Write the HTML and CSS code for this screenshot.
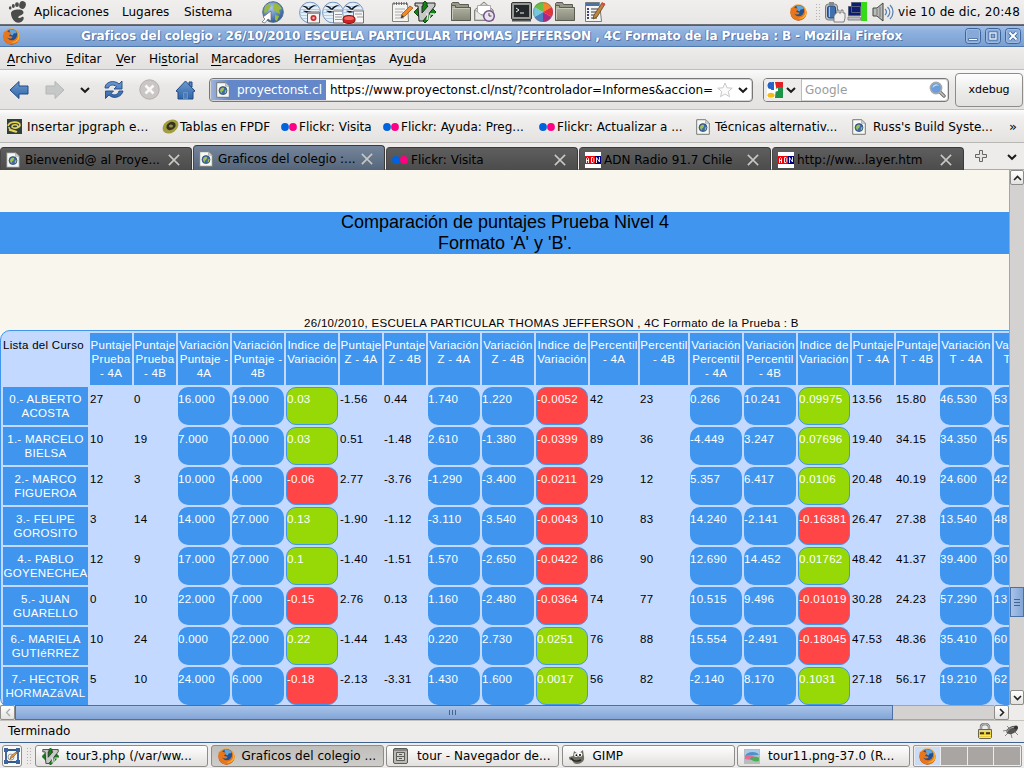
FILE: index.html
```html
<!DOCTYPE html>
<html lang="es">
<head>
<meta charset="utf-8">
<title>Graficos del colegio - Mozilla Firefox</title>
<link rel="stylesheet" href="styles.css">
</head>
<body>
<svg class="defs" aria-hidden="true">
  <defs>
    <linearGradient id="blueg" x1="0" y1="0" x2="0" y2="1"><stop offset="0" stop-color="#6f9ad0"/><stop offset="1" stop-color="#2f66a8"/></linearGradient>
    <linearGradient id="fold" x1="0" y1="0" x2="0" y2="1"><stop offset="0" stop-color="#b5b6a4"/><stop offset="1" stop-color="#85877a"/></linearGradient>
    <radialGradient id="sea" cx=".4" cy=".3" r=".8"><stop offset="0" stop-color="#a9c8ec"/><stop offset="1" stop-color="#1f4f8c"/></radialGradient>
    <radialGradient id="fox" cx=".6" cy=".2" r=".9"><stop offset="0" stop-color="#ffd84a"/><stop offset=".5" stop-color="#ee7d1b"/><stop offset="1" stop-color="#a92b08"/></radialGradient>
  </defs>
  <symbol id="firefox" viewBox="0 0 16 16">
    <circle cx="8" cy="8" r="7.7" fill="url(#fox)"/>
    <circle cx="8.3" cy="6.4" r="5.4" fill="#24518f"/>
    <path d="M6 1.6c3-1 6 .5 7 3l-3 .5-1 2-2-1z" fill="#63a5dd"/>
    <path d="M1 3l1 1.2C3 3 5 3 5.500 4l2 .3C7.600 6 6 6.300 5.700 7.300c1 .7 2.300.3 3.300 1.200-1 2-4 1.500-5 .5 1 3.500 7.500 4 9-1 .7-2 .2-4-.6-5.200C15.600 5 16 8 15 11c-2 4-6 5-9.500 4C1 13.600-.5 8 1 3z" fill="#e8761a"/>
    <path d="M13 3c2 3 1.500 6.500 0 8-2 2.300-4.500 2.500-6.500 1.500 4 3 8.500.5 9-4C15.700 6 14.600 4 13 3z" fill="#f9b233"/>
  </symbol>
  <symbol id="page" viewBox="0 0 14 16">
    <path d="M.7.7h9L13.300 4v11.300H.7z" fill="#f7f8f5" stroke="#777b74"/>
    <path d="M9.500.8l3.700 3.500H9.500z" fill="#cfd2cb" stroke="#9a9d96" stroke-width=".6"/>
    <circle cx="7" cy="8.600" r="4" fill="#3c6ca8" stroke="#26466f" stroke-width=".7"/>
    <path d="M4 8c1-2.500 3-2.500 4-2 .500 1-.5 2-1 3-1.500.300-1.500 1.500-1 2.500-1-.5-2-1.500-2-3.500zM9 8.500l1.700-.5-1 3-1 .500z" fill="#a9bf4a"/>
  </symbol>
  <symbol id="flickr" viewBox="0 0 16 8"><circle cx="4" cy="4" r="3.900" fill="#0063dc"/><circle cx="12" cy="4" r="3.900" fill="#ff0084"/></symbol>
  <symbol id="close" viewBox="0 0 12 12"><path d="M1.500 1.500l9 9M10.500 1.500l-9 9" stroke="#c9c9c3" stroke-width="1.700" fill="none" stroke-linecap="square"/></symbol>
  <symbol id="chev" viewBox="0 0 12 8"><path d="M2 2l4 3.800L10 2" stroke="#1b1b1b" stroke-width="2" fill="none"/></symbol>
  <symbol id="adn" viewBox="0 0 16 16"><path d="M0 0h16v16H0z" fill="#fff"/><path d="M0 4h10v8H0z" fill="#f00008"/><path d="M10 4h6v8h-6z" fill="#00007c"/><path d="M1.500 11V6.500l1-1 1 1V11M1.500 8.500h2M6.500 5.500v5H8l.8-1V6.500l-.8-1zM11.500 11V5.500l3 4.500V5" stroke="#fff" stroke-width=".9" fill="none"/></symbol>
  <symbol id="folder" viewBox="0 0 22 20">
    <path d="M1.500 1.500l1-1h6l1 2h9v3h1.500v13h-18z" fill="#969888" stroke="#5b5d52"/>
    <path d="M1.500 18.500v-15h4v2h15v13z" fill="url(#fold)" stroke="#5b5d52"/><path d="M2.500 17.500V6.500h17" fill="none" stroke="#c6c8b9"/>
  </symbol>
  <symbol id="office" viewBox="0 0 22 22">
    <circle cx="11" cy="11" r="10.400" fill="#e6eef8" stroke="#6f94c0"/>
    <path d="M1.500 8h19M1 11h20M1.500 14h19M3 17h16M4 5h14" stroke="#b4cbe4"/>
    <path d="M3 4.500c3-.5 5 .5 6.500 2.500C11 5 14 3.300 18 3.500c-3 1-5.500 2.500-7.500 5L8.500 8C7 6.500 5.500 5.200 3 4.500zM4 9.500c2.500-.7 3.500.3 5 0 1 .7 3 .7 4 0-1.500 1.500-5.500 2-6 1.600z" fill="#151a20"/>
  </symbol>
  <symbol id="vim" viewBox="0 0 22 22">
    <path d="M11 0l11 11-11 11L0 11z" fill="#138318" stroke="#0d4c10"/>
    <path d="M1 2h8v3H8v7l6-7h-1V2h8v3L9 20H5L4 5H1z" fill="#c7c9c6" stroke="#242824"/>
    <path d="M12 13h2l-1 6m3-6h4l-1 6m-3-5l-1 5" stroke="#e5e5e5" stroke-width="1.400" fill="none"/>
  </symbol>
  <symbol id="winbtn" viewBox="0 0 16 16"><rect x=".5" y=".5" width="15" height="15" rx="3" fill="#86a9d8" stroke="#3d659b"/><rect x="1.500" y="1.500" width="13" height="13" rx="2" fill="none" stroke="#a9c4e8" stroke-width=".7"/></symbol>
</svg>

<header class="panel">
  <svg class="foot" viewBox="0 0 19 22"><g fill="#4b4b49"><ellipse cx="14.500" cy="4" rx="3.300" ry="3.900" transform="rotate(15 14.500 4)"/><ellipse cx="9" cy="3.700" rx="1.900" ry="2.400"/><ellipse cx="5.300" cy="4.900" rx="1.500" ry="2"/><ellipse cx="2.200" cy="6.900" rx="1.300" ry="1.700"/><path d="M3 12.500C3 9.500 7 8.300 11.500 8.500c4 .3 5 3.200 3 4.800-2 1.400-4.500 2-4.200 3.200.3 1.300 2 .2 3.500-.6 1.800-.7 2.500 1 1.500 2.800-1.500 3-5.300 3.800-7.800 2.300C4.500 19 3 15.500 3 12.500z"/></g></svg>
  <span>Aplicaciones</span><span>Lugares</span><span>Sistema</span>
  <svg width="23" height="23" viewBox="0 0 23 23"><circle cx="12" cy="11" r="10.300" fill="url(#sea)" stroke="#4c6d92"/><path d="M12 2c4-.5 8 3 9 6l-3 1 1 4-4-2-3-3 1-3zM4 5l4-2 2 2-4 6-3 1zM14 14l4 1-2 5-2-1z" fill="#9bb93c"/><path d="M1 21l3-3-2-2 8-6v10l-3-2-3 4z" fill="#fff" stroke="#666" stroke-width=".7"/></svg>
  <svg width="22" height="23" viewBox="0 0 22 22"><use href="#office"/><path d="M8.500 10.500h12v11h-12z" fill="#f4f4f4" stroke="#666"/><path d="M8.500 10.500h12v2h-12z" fill="#999"/><circle cx="14.500" cy="16.500" r="3" fill="#cf2a2a"/><circle cx="14.500" cy="16.500" r="1.200" fill="#f1baba"/></svg>
  <svg width="22" height="23" viewBox="0 0 22 22"><use href="#office"/><path d="M11.500 9.500h10v12h-10z" fill="#f6f6f6" stroke="#777"/><path d="M13 13h7M13 15.500h7M13 18h7" stroke="#999"/></svg>
  <svg width="22" height="23" viewBox="0 0 22 22"><use href="#office"/><path d="M11.500 9.500h10v12h-10z" fill="#f6f6f6" stroke="#777"/><path d="M13 12.500h7M15 15.500h6" stroke="#999"/><path d="M1 17c0-4 12-4 12 0v2c0 4-12 4-12 0z" fill="#cc2525" stroke="#851313"/><path d="M2 17c1-3 9-3 10 0-1 2-9 2-10 0z" fill="#ee6a62"/></svg>
  <svg width="22" height="22" viewBox="0 0 22 22"><path d="M1.500 2.500h15l1 18h-16z" fill="#f4f4f1" stroke="#85857f"/><path d="M3 1v3M5.500 1v3M8 1v3M10.500 1v3M13 1v3M15.500 1v3" stroke="#666"/><path d="M4 8h10M4 11h8M4 14h7M4 17h9" stroke="#aaa"/><path d="M10 17l1-4 8-8 3 2-8 8z" fill="#f0892a" stroke="#a35212" stroke-width=".8"/><path d="M10 17l1-3 2 2z" fill="#333"/></svg>
  <svg width="22" height="22"><use href="#vim"/></svg>
  <svg width="22" height="20"><use href="#folder"/></svg>
  <svg width="23" height="22" viewBox="0 0 23 22"><path d="M1.500 9L11 1l9 8v10.500H1.500z" fill="#d5d6d1" stroke="#80827b"/><path d="M4.500 4.500h13v9h-13z" fill="#fff" stroke="#aaa"/><path d="M2 9l9 7 9-7v10H2z" fill="#e9eae6" stroke="#92948d" stroke-width=".7"/><circle cx="16" cy="15" r="5.300" fill="#e9e3ee" stroke="#745087" stroke-width="1.500"/><path d="M16 12v3h2.500" stroke="#444" fill="none"/></svg>
  <svg width="21" height="20" viewBox="0 0 21 20"><rect x=".5" y=".5" width="20" height="17" rx="1.500" fill="#969993" stroke="#343632"/><path d="M3 3h15v12H3z" fill="#24292c"/><path d="M5 6l3 2-3 2M9 11h4" stroke="#f2f2f2" fill="none"/><path d="M1 18h19v1.500H1z" fill="#555"/></svg>
  <svg width="20" height="20" viewBox="-10 -10 20 20"><path d="M0 0L0-10A10 10 0 0 1 8.700-5z" fill="#f08a29"/><path d="M0 0L8.700-5A10 10 0 0 1 8.700 5z" fill="#e5323e"/><path d="M0 0L8.700 5A10 10 0 0 1 0 10z" fill="#a62a83"/><path d="M0 0V10A10 10 0 0 1-8.700 5z" fill="#4c83c3"/><path d="M0 0L-8.700 5A10 10 0 0 1-8.700-5z" fill="#73c8dd"/><path d="M0 0L-8.700-5A10 10 0 0 1 0-10z" fill="#6abd45"/><circle r="9.500" fill="none" stroke="#666" stroke-opacity=".4"/></svg>
  <svg width="22" height="20"><use href="#folder"/></svg>
  <svg width="23" height="22" viewBox="0 0 23 22"><path d="M1.500 1.500h14l2 19h-16z" fill="#f4f4f2" stroke="#797b76"/><path d="M2 2h13v3H2z" fill="#4870ad"/><path d="M3 8h2M3 11h2M3 14h2M3 17h2" stroke="#447" stroke-width="2"/><path d="M7 8h7M7 11h7M7 14h6M7 17h6" stroke="#777" stroke-width="1.300"/><path d="M9 18l1-4L18 2l3 1-8 13z" fill="#bd8541" stroke="#664018" stroke-width=".8"/><path d="M18 1l3 2-1 2-3-2z" fill="#d74e45"/></svg>
  <svg width="17" height="17"><use href="#firefox"/></svg>
  <span class="grip"></span>
  <svg width="22" height="22" viewBox="0 0 22 22"><rect x="1.500" y="3" width="12" height="16" rx="3" fill="#c4c7c6" stroke="#737a7c"/><rect x="5" y="1" width="5" height="3" fill="#888"/><rect x="3.500" y="5" width="8" height="12" rx="2" fill="#3f6fae" stroke="#274d80"/><path d="M5.500 6v10" stroke="#a9c6ea"/><path d="M10 21v-6l2-3h1V9h2v3h2V9h2v3h2v5l-1 4z" fill="#eee" stroke="#666" stroke-width=".8"/></svg>
  <svg width="21" height="20" viewBox="0 0 21 20"><path d="M4.500.5h12v10h-12zM1.500 4.500h12v9h-12z" fill="#101c72" stroke="#526078"/><path d="M1 15h12l1 3H1z" fill="#bfc2c4" stroke="#888"/><path d="M14 0h6v19h-6z" fill="#37da17"/></svg>
  <svg width="22" height="20" viewBox="0 0 22 20"><path d="M1 6h4l6-5v18l-6-5H1z" fill="#b9bbb7" stroke="#41433f"/><path d="M8 5v10M5 7v6" stroke="#777"/><path d="M13 7c2 2 2 4 0 6M15.500 5c3 3 3 7 0 10M18 3c4 4 4 10 0 14" stroke="#5b83b8" stroke-width="1.300" fill="none"/></svg>
  <span class="clock">vie 10 de dic, 20:48</span>
</header>

<div class="titlebar">
  <svg class="app" width="17" height="17"><use href="#firefox"/></svg>
  <span class="caption">Graficos del colegio : 26/10/2010 ESCUELA PARTICULAR THOMAS JEFFERSON , 4C Formato de la Prueba : B - Mozilla Firefox</span>
  <svg width="16" height="16"><use href="#winbtn"/><path d="M3.500 10.500h9v2h-9z" fill="#fff" stroke="#3d659b" stroke-width=".8"/></svg>
  <svg width="16" height="16"><use href="#winbtn"/><path d="M5 5h6v6H5z" fill="none" stroke="#3d659b" stroke-width="3"/><path d="M5 5h6v6H5z" fill="none" stroke="#e9f0fa" stroke-width="1.400"/></svg>
  <svg width="16" height="16"><use href="#winbtn"/><path d="M4.500 4.500l7 7m0-7l-7 7" stroke="#3d659b" stroke-width="3.800"/><path d="M4.500 4.500l7 7m0-7l-7 7" stroke="#fff" stroke-width="2"/></svg>
</div>

<nav class="menubar"><span><u>A</u>rchivo</span><span><u>E</u>ditar</span><span><u>V</u>er</span><span>Hi<u>s</u>torial</span><span><u>M</u>arcadores</span><span>Herramien<u>t</u>as</span><span>Ay<u>u</u>da</span></nav>

<div class="toolbar">
  <svg width="20" height="20" viewBox="0 0 20 20"><path d="M1 10l9-8.500V6h9v8h-9v4.500z" fill="url(#blueg)" stroke="#204a87"/></svg>
  <svg width="20" height="20" viewBox="0 0 20 20"><path d="M19 10l-9-8.500V6H1v8h9v4.500z" fill="#c6c8c8" stroke="#b5b7b7"/></svg>
  <svg width="12" height="8"><use href="#chev"/></svg>
  <svg width="20" height="20" viewBox="0 0 20 20"><path d="M1 8C1 3 7 0 13 2.500l2 1.500 3-3v8h-8l2.500-2.500C9 4 5 5 4.500 8zM19 11c-1 5-7 8-12 5.500L5 15l-3.500 3.500V11h8L7 13.500c3 2.500 7 1.500 8-2.500z" fill="url(#blueg)" stroke="#204a87" stroke-width=".9"/></svg>
  <svg width="21" height="21" viewBox="0 0 21 21"><circle cx="10.500" cy="10.500" r="9.700" fill="#cbc6c5" stroke="#b1adac"/><path d="M6.500 6.500l8 8m0-8l-8 8" stroke="#f8f8f8" stroke-width="2.600"/></svg>
  <svg width="21" height="20" viewBox="0 0 21 20"><path d="M14 2h3v5h-3z" fill="#5583bb" stroke="#204a87"/><path d="M1 11l9.500-10L20 11l-2 1v7H3v-7z" fill="url(#blueg)" stroke="#204a87"/><path d="M8.500 12.500h4V19h-4z" fill="#4c7dba" stroke="#7da5d6" stroke-width=".6"/></svg>
  <div class="field url">
    <div class="site"><svg width="14" height="16"><use href="#page"/></svg><span>proyectonst.cl</span></div>
    <span class="addr">https://www.proyectonst.cl/nst/?controlador=Informes&amp;accion=</span>
    <svg width="16" height="16" viewBox="0 0 16 16"><path d="M8 1l2 4.800 5.200.4-4 3.400 1.300 5.100L8 12l-4.500 2.700 1.300-5.100-4-3.400L6 5.800z" fill="#fbfbfb" stroke="#c9c9c9"/></svg>
    <svg width="12" height="8"><use href="#chev"/></svg>
  </div>
  <div class="field search">
    <div class="engine"><svg width="16" height="16" viewBox="0 0 16 16"><path d="M0 0h16v16H0z" fill="#fff"/><path d="M8 0h8v5H9z" fill="#e51d25"/><path d="M9 5h7v11H8z" fill="#1c9346"/><path d="M6 8l5-2v3l-4 1z" fill="#fff"/><ellipse cx="3.500" cy="3.500" rx="3" ry="3.500" fill="#2662c8"/><path d="M5 0h2v8H4z" fill="#2662c8"/><ellipse cx="4" cy="13.200" rx="3.500" ry="2.500" fill="#f5bb19"/></svg><svg width="12" height="8"><use href="#chev"/></svg></div>
    <span>Google</span>
    <svg width="17" height="17" viewBox="0 0 17 17"><path d="M10 10l5 5" stroke="#6d6e6b" stroke-width="3.400" stroke-linecap="round"/><path d="M10 10l5 5" stroke="#c4c5c1" stroke-width="1.500" stroke-linecap="round"/><circle cx="7" cy="7" r="5.600" fill="#6b9cdb" stroke="#a7aaa8" stroke-width="1.600"/><path d="M3.500 7c0-4 5-5 6.500-2-3-1-4 0-6.500 2z" fill="#c2daf6"/></svg>
  </div>
  <button class="xdebug">xdebug</button>
</div>

<div class="bookmarks">
  <svg width="15" height="15" viewBox="0 0 15 15"><path d="M0 0h15v15H0z" fill="#2f3f3c"/><path d="M1 7c1-5 12-5 12-1 0 3-6 4-8 2 0-3 6-3 6 0M2 8c0 4 5 3 8 5M2 11l7 2" fill="none" stroke="#e5d257" stroke-width="1.600"/></svg><span class="wide">Insertar jpgraph e...</span>
  <svg width="17" height="15" viewBox="0 0 17 15"><ellipse cx="8.500" cy="7.500" rx="8.500" ry="6.300" transform="rotate(-35 8.500 7.500)" fill="#a39d40"/><ellipse cx="9" cy="7" rx="5" ry="3.800" transform="rotate(-35 9 7)" fill="#34341e"/><ellipse cx="9" cy="7" rx="2" ry="1.500" fill="#96924c"/></svg><span>Tablas en FPDF</span>
  <svg width="16" height="8"><use href="#flickr"/></svg><span>Flickr: Visita</span>
  <svg width="16" height="8"><use href="#flickr"/></svg><span>Flickr: Ayuda: Preg...</span>
  <svg width="16" height="8"><use href="#flickr"/></svg><span>Flickr: Actualizar a ...</span>
  <svg width="14" height="16"><use href="#page"/></svg><span>Técnicas alternativ...</span>
  <svg width="14" height="16"><use href="#page"/></svg><span>Russ's Build Syste...</span>
  <span class="more">»</span>
</div>

<div class="tabs">
  <div class="tab"><svg width="14" height="16"><use href="#page"/></svg><span>Bienvenid@ al Proye...</span><svg width="12" height="12"><use href="#close"/></svg></div>
  <div class="tab active"><svg width="14" height="16"><use href="#page"/></svg><span>Graficos del colegio :...</span><svg width="12" height="12"><use href="#close"/></svg></div>
  <div class="tab"><svg width="16" height="8"><use href="#flickr"/></svg><span>Flickr: Visita</span><svg width="12" height="12"><use href="#close"/></svg></div>
  <div class="tab"><svg width="16" height="16"><use href="#adn"/></svg><span>ADN Radio 91.7 Chile</span><svg width="12" height="12"><use href="#close"/></svg></div>
  <div class="tab"><svg width="16" height="16"><use href="#adn"/></svg><span class="wide">http://ww...layer.htm</span><svg width="12" height="12"><use href="#close"/></svg></div>
  <svg class="plus" width="12" height="12" viewBox="0 0 12 12"><path d="M4.500.5h3v4h4v3h-4v4h-3v-4h-4v-3h4z" fill="#e6e5e3" stroke="#666"/></svg>
  <svg class="all" width="12" height="8"><use href="#chev"/></svg>
</div>

<div class="view">
  <main class="page">
    <h1>Comparación de puntajes Prueba Nivel 4<br>Formato 'A' y 'B'.</h1>
    <p class="subtitle">26/10/2010, ESCUELA PARTICULAR THOMAS JEFFERSON , 4C Formato de la Prueba : B</p>
    <table class="scores">
      <colgroup><col class="name"><col span="2" class="s"><col span="3" class="v"><col span="2" class="s"><col span="3" class="v"><col span="2" class="p"><col span="3" class="v"><col span="2" class="s"><col span="2" class="v"></colgroup>
      <thead><tr><td>Lista del Curso</td><th>Puntaje Prueba - 4A</th><th>Puntaje Prueba - 4B</th><th>Variación Puntaje - 4A</th><th>Variación Puntaje - 4B</th><th>Indice de Variación</th><th>Puntaje Z - 4A</th><th>Puntaje Z - 4B</th><th>Variación Z - 4A</th><th>Variación Z - 4B</th><th>Indice de Variación</th><th>Percentil - 4A</th><th>Percentil - 4B</th><th>Variación Percentil - 4A</th><th>Variación Percentil - 4B</th><th>Indice de Variación</th><th>Puntaje T - 4A</th><th>Puntaje T - 4B</th><th>Variación T - 4A</th><th>Variación T - 4B</th></tr></thead>
      <tbody>
        <tr><th>0.- ALBERTO ACOSTA</th><td>27</td><td>0</td><td class="b">16.000</td><td class="b">19.000</td><td class="up">0.03</td><td>-1.56</td><td>0.44</td><td class="b">1.740</td><td class="b">1.220</td><td class="down">-0.0052</td><td>42</td><td>23</td><td class="b">0.266</td><td class="b">10.241</td><td class="up">0.09975</td><td>13.56</td><td>15.80</td><td class="b">46.530</td><td class="b">53</td></tr>
        <tr><th>1.- MARCELO BIELSA</th><td>10</td><td>19</td><td class="b">7.000</td><td class="b">10.000</td><td class="up">0.03</td><td>0.51</td><td>-1.48</td><td class="b">2.610</td><td class="b">-1.380</td><td class="down">-0.0399</td><td>89</td><td>36</td><td class="b">-4.449</td><td class="b">3.247</td><td class="up">0.07696</td><td>19.40</td><td>34.15</td><td class="b">34.350</td><td class="b">45</td></tr>
        <tr><th>2.- MARCO FIGUEROA</th><td>12</td><td>3</td><td class="b">10.000</td><td class="b">4.000</td><td class="down">-0.06</td><td>2.77</td><td>-3.76</td><td class="b">-1.290</td><td class="b">-3.400</td><td class="down">-0.0211</td><td>29</td><td>12</td><td class="b">5.357</td><td class="b">6.417</td><td class="up">0.0106</td><td>20.48</td><td>40.19</td><td class="b">24.600</td><td class="b">42</td></tr>
        <tr><th>3.- FELIPE GOROSITO</th><td>3</td><td>14</td><td class="b">14.000</td><td class="b">27.000</td><td class="up">0.13</td><td>-1.90</td><td>-1.12</td><td class="b">-3.110</td><td class="b">-3.540</td><td class="down">-0.0043</td><td>10</td><td>83</td><td class="b">14.240</td><td class="b">-2.141</td><td class="down">-0.16381</td><td>26.47</td><td>27.38</td><td class="b">13.540</td><td class="b">48</td></tr>
        <tr><th>4.- PABLO GOYENECHEA</th><td>12</td><td>9</td><td class="b">17.000</td><td class="b">27.000</td><td class="up">0.1</td><td>-1.40</td><td>-1.51</td><td class="b">1.570</td><td class="b">-2.650</td><td class="down">-0.0422</td><td>86</td><td>90</td><td class="b">12.690</td><td class="b">14.452</td><td class="up">0.01762</td><td>48.42</td><td>41.37</td><td class="b">39.400</td><td class="b">30</td></tr>
        <tr><th>5.- JUAN GUARELLO</th><td>0</td><td>10</td><td class="b">22.000</td><td class="b">7.000</td><td class="down">-0.15</td><td>2.76</td><td>0.13</td><td class="b">1.160</td><td class="b">-2.480</td><td class="down">-0.0364</td><td>74</td><td>77</td><td class="b">10.515</td><td class="b">9.496</td><td class="down">-0.01019</td><td>30.28</td><td>24.23</td><td class="b">57.290</td><td class="b">13</td></tr>
        <tr><th>6.- MARIELA GUTIéRREZ</th><td>10</td><td>24</td><td class="b">0.000</td><td class="b">22.000</td><td class="up">0.22</td><td>-1.44</td><td>1.43</td><td class="b">0.220</td><td class="b">2.730</td><td class="up">0.0251</td><td>76</td><td>88</td><td class="b">15.554</td><td class="b">-2.491</td><td class="down">-0.18045</td><td>47.53</td><td>48.36</td><td class="b">35.410</td><td class="b">60</td></tr>
        <tr><th>7.- HECTOR HORMAZáVAL</th><td>5</td><td>10</td><td class="b">24.000</td><td class="b">6.000</td><td class="down">-0.18</td><td>-2.13</td><td>-3.31</td><td class="b">1.430</td><td class="b">1.600</td><td class="up">0.0017</td><td>56</td><td>82</td><td class="b">-2.140</td><td class="b">8.170</td><td class="up">0.1031</td><td>27.18</td><td>56.17</td><td class="b">19.210</td><td class="b">62</td></tr>
      </tbody>
    </table>
  </main>
  <div class="vscroll">
    <span class="sbtn"><svg width="9" height="6" viewBox="0 0 9 6"><path d="M1 5l3.500-3.500L8 5" stroke="#222" stroke-width="1.600" fill="none"/></svg></span>
    <span class="before"></span><span class="thumb"><i></i><i></i><i></i></span><span class="after"></span>
    <span class="sbtn"><svg width="9" height="6" viewBox="0 0 9 6"><path d="M1 1l3.500 3.500L8 1" stroke="#222" stroke-width="1.600" fill="none"/></svg></span>
  </div>
</div>
<div class="hscroll">
  <span class="sbtn"><svg width="6" height="9" viewBox="0 0 6 9"><path d="M5 1L1.500 4.500 5 8" stroke="#aaa" stroke-width="1.300" fill="none"/></svg></span>
  <span class="thumb"><i></i><i></i><i></i></span><span class="rest"></span>
  <span class="sbtn"><svg width="6" height="9" viewBox="0 0 6 9"><path d="M1 1l3.500 3.500L1 8" stroke="#222" stroke-width="1.600" fill="none"/></svg></span>
  <span class="corner"></span>
</div>

<div class="status"><span>Terminado</span>
  <svg width="14" height="16" viewBox="0 0 14 16"><path d="M3 8V4c0-4 8-4 8 0v4" fill="none" stroke="#777" stroke-width="2.400"/><path d="M3 8V4c0-4 8-4 8 0v4" fill="none" stroke="#ddd" stroke-width=".8"/><path d="M.5 6.500h13v8l-1 1h-11l-1-1z" fill="#e9cf37" stroke="#6d674a"/><path d="M1 8h12M1 12.500h12" stroke="#dedede"/><path d="M2 10.300h10" stroke="#363320" stroke-width="2" stroke-dasharray="4 2"/><path d="M1 14.500h12" stroke="#ddd"/></svg>
  <svg width="16" height="14" viewBox="0 0 16 14"><path d="M0 7l5-1M2 12l4-4M8 10l1 4M12 8l3 3M6 4L4 2" stroke="#888"/><ellipse cx="9" cy="6" rx="6" ry="3.600" transform="rotate(-25 9 6)" fill="#555653"/><path d="M4 8c1-3 5-5 9-5" stroke="#aaa" fill="none"/><circle cx="13" cy="3.500" r="2" fill="#333"/></svg>
</div>

<footer class="taskbar">
  <span class="show"><svg width="16" height="16" viewBox="0 0 16 16"><path d="M1 1l3 1h8l3-1-1 3v8l1 3-3-1H4l-3 1 1-3V4z" fill="#f4f5f7" stroke="#315a91" stroke-width="1.800"/><path d="M0 0h4v4H0zM12 0h4v4h-4zM0 12h4v4H0zM12 12h4v4h-4z" fill="#3c669f"/><circle cx="7" cy="9" r="3" fill="none" stroke="#999"/><path d="M6 11l1-3 5-4 1 1-4 4z" fill="#e3a13c" stroke="#7c4c18" stroke-width=".6"/></svg></span>
  <span class="grip"></span>
  <span class="task"><svg width="17" height="17" viewBox="0 0 22 22"><use href="#vim"/></svg><b>tour3.php (/var/ww...</b></span>
  <span class="task on"><svg width="17" height="17"><use href="#firefox"/></svg><b>Graficos del colegio ...</b></span>
  <span class="task"><svg width="15" height="16" viewBox="0 0 15 16"><rect x=".5" y=".5" width="14" height="15" rx="1.500" fill="#b8bab3" stroke="#5b5d58"/><path d="M3.500 4.500h8v4h-8zM3.500 8.500h8v4h-8z" fill="#d1d3cc" stroke="#5b5d58"/><path d="M6 6.500h3M6 10.500h3M1 2h13" stroke="#555"/></svg><b>tour - Navegador de...</b></span>
  <span class="task"><svg width="17" height="15" viewBox="0 0 17 15"><path d="M0 8l4-1 1-5 4 3 5-4 1 7c1 4-3 7-7 7-3 0-4-2-5-4-2 1-3-1-3-3z" fill="#6f6c61"/><circle cx="7" cy="6" r="2" fill="#fff"/><circle cx="11" cy="5.500" r="2.300" fill="#fff"/><circle cx="7.400" cy="6.200" r=".9"/><circle cx="11" cy="6" r="1"/><path d="M2 9c2 3 6 4 10 2" stroke="#282723" stroke-width="1.500" fill="none"/></svg><b>GIMP</b></span>
  <span class="task"><svg width="16" height="15" viewBox="0 0 16 15"><rect width="16" height="15" fill="#b9bcbe"/><path d="M1 1h14v6H1z" fill="#a9cbe7"/><path d="M1 7c2-5 12-5 14-1z" fill="#4e91c8"/><path d="M1 7c4-2 10 0 10 2s-6 2-10 1z" fill="#e66a9a"/><path d="M6 9c3-2 8-1 9 0v3c-3 1-8 0-9-3z" fill="#4aaf55"/></svg><b>tour11.png-37.0 (R...</b></span>
  <span class="pager"><i class="cur"><svg width="17" height="17"><use href="#firefox"/></svg></i><i></i><i></i><i></i></span>
</footer>
</body>
</html>
```

FILE: styles.css
```css
* { box-sizing: border-box; }
html, body { margin: 0; width: 1024px; height: 768px; overflow: hidden; }
body { display: flex; flex-direction: column; font: 12px "DejaVu Sans", sans-serif; color: #000; background: #edeceb; white-space: nowrap; }
body > * { flex: none; }
svg { display: block; flex: none; }
.defs { position: absolute; width: 0; height: 0; }
.wide { letter-spacing: .1px; }

.panel { height: 25px; display: grid; grid-template-columns: 34px 88px 62px 77px 38px 23px 20px 49px 23px 36px 23px 38px 22px 21px 30px 206px 25px 9px 23px 25px 26px 1fr; align-items: center; background: linear-gradient(#f0efee, #e8e7e5); border-bottom: 1px solid #6c7076; }
.foot { width: 19px; height: 22px; margin-left: 8px; }
.clock { letter-spacing: .13px; }
.grip { width: 7px; height: 18px; background: radial-gradient(circle, #b3b1ae 0.8px, transparent 1px) 0 0 / 3px 3px; }

.titlebar { height: 22px; display: grid; grid-template-columns: 81px 884px 20px 20px 1fr; align-items: center; background: linear-gradient(#a3bfe6, #8db0de 30%, #7b9fd0); border-top: 1px solid #47617f; border-bottom: 1px solid #4f78ae; }
.titlebar .app { margin-left: 3px; }
.caption { color: #fff; font-weight: bold; letter-spacing: -.088px; text-shadow: 1px 1px 0 #5378ac, -1px 0 0 #6286ba; }

.menubar { height: 23px; display: grid; grid-template-columns: 59px 50px 33px 62px 83px 95px 1fr; padding: 1px 0 0 7px; align-items: center; background: linear-gradient(#eeedec, #e2e1df); border-bottom: 1px solid #bfbdba; }
.menubar u { text-underline-offset: 2px; }

.toolbar { height: 40px; display: grid; grid-template-columns: 36px 34px 25px 35px 36px 34px 554px 192px 69px; padding-left: 9px; align-items: center; background: linear-gradient(#fafafa, #e9e8e6 40%, #e4e3e1); border-bottom: 1px solid #c3c1be; }
.field { height: 24px; display: grid; align-items: center; background: #fff; border: 1px solid #777; border-radius: 4px; box-shadow: inset 0 0 0 1px #d6d6d6; }
.url { width: 544px; grid-template-columns: 115px 391px 20px 1fr; padding-left: 1px; }
.site { height: 20px; display: flex; align-items: center; gap: 7px; padding-left: 5px; background: linear-gradient(90deg, #9db2dd, #6387c8 18px); color: #fff; }
.addr { padding-left: 4px; overflow: hidden; }
.search { width: 186px; grid-template-columns: 41px 124px 1fr; color: #9b9b9b; }
.engine { height: 22px; width: 38px; display: flex; gap: 2px; align-items: center; padding-left: 3px; border-right: 1px solid #bbb; background: #edeceb; border-radius: 3px 0 0 3px; }
.xdebug { height: 34px; width: 68px; padding: 0; font: 11px "DejaVu Sans", sans-serif; background: linear-gradient(#fefefe, #ececeb 50%, #e2e1df); border: 1px solid #8e8c89; border-radius: 4px; }

.bookmarks { height: 33px; display: grid; grid-template-columns: 20px 135px 18px 101px 18px 84px 18px 138px 18px 139px 19px 137px 21px 136px 1fr; padding: 1px 0 0 7px; align-items: center; background: linear-gradient(#fdfdfd, #f1f0ef 20%, #e4e3e1); border-bottom: 1px solid #b9b7b4; }
.more { font-size: 13px; }

.tabs { height: 27px; display: flex; align-items: flex-end; gap: 1px; background: #edeceb; border-bottom: 1px solid #aaa; }
.tab { width: 192px; height: 23px; margin-bottom: -1px; padding: 1px 0 0 5px; display: grid; grid-template-columns: 19px 143px 12px; align-items: center; background: linear-gradient(#5e5e5e, #4c4c4c); border: 1px solid #3a3a3a; border-bottom: 0; border-left-color: #474747; border-radius: 4px 4px 0 0; }
.tab.active { height: 25px; background: linear-gradient(#74859b, #56657a); }
.plus { margin: 0 18px 7px 10px; }
.all { margin-bottom: 8px; }

.view { height: 535px; display: flex; }
.page { width: 1009px; height: 535px; overflow: hidden; background: #f9f6ee; font-family: "Liberation Sans", Arial, sans-serif; }
.page h1 { margin: 42px 0 0; padding-left: 1px; height: 42px; font-size: 18px; line-height: 21px; font-weight: normal; text-align: center; background: #4096ee; }
.subtitle { margin: 62px 0 0; padding-left: 304px; font-size: 11.5px; letter-spacing: .3px; line-height: 14px; }
.scores { table-layout: fixed; width: 1049px; border-collapse: separate; border-spacing: 2px; background: #c3d9ff; border: 1px solid #4096ee; border-radius: 10px; font-size: 11.5px; letter-spacing: .28px; line-height: 14px; white-space: normal; }
.scores .name { width: 85px; }
.scores .s { width: 42px; }
.scores .v { width: 52px; }
.scores .p { width: 48px; }
.scores th, .scores td { padding: 5px 0; vertical-align: top; font-weight: normal; }
.scores th { background: #4096ee; color: #fff; text-align: center; }
.scores tbody tr { height: 38px; }
.scores .b { background: #4096ee; color: #fff; border-radius: 10px; }
.scores .up, .scores .down { color: #fff; border: 1px solid #4096ee; border-radius: 10px; padding: 4px 0; background: #96d906; }
.scores .down { background: #ff4545; }

.sbtn { flex: none; width: 15px; height: 15px; display: flex; align-items: center; justify-content: center; background: linear-gradient(#fff, #e3e2e0); border: 1px solid #8e8c89; border-radius: 2px; }
.vscroll { width: 15px; display: flex; flex-direction: column; background: #d4d2d0; border-left: 1px solid #a7a5a2; }
.vscroll .sbtn { width: 14px; }
.vscroll .before { height: 402px; }
.vscroll .thumb { height: 30px; display: flex; flex-direction: column; align-items: center; justify-content: center; gap: 2px; background: linear-gradient(90deg, #a8c3e8, #82a5d7); border: 1px solid #4a70a5; }
.vscroll .thumb i { width: 6px; height: 1px; background: #42658f; }
.vscroll .after { flex: 1; }
.hscroll { height: 15px; display: flex; background: #d4d2d0; }
.hscroll .thumb { width: 878px; display: flex; align-items: center; justify-content: center; gap: 2px; padding-right: 4px; background: linear-gradient(#a8c3e8, #82a5d7); border: 1px solid #4a70a5; }
.hscroll .thumb i { width: 1px; height: 5px; background: #42658f; }
.hscroll .rest { width: 101px; border-top: 1px solid #a7a5a2; border-bottom: 1px solid #a7a5a2; }
.hscroll .corner { flex: 1; background: #edeceb; }

.status { height: 23px; display: grid; grid-template-columns: 970px 25px 1fr; padding: 0 0 1px 8px; align-items: center; background: #edeceb; border-top: 1px solid #c4c2bf; border-bottom: 1px solid #3f638f; }
.taskbar { height: 25px; display: flex; align-items: center; padding: 1px 0 0 2px; background: #edeceb; }
.show { width: 20px; height: 22px; display: grid; place-items: center; border: 1px solid #8e8c89; border-radius: 3px; background: #fafafa; }
.taskbar .grip { margin: 0 2px 0 4px; }
.task { width: 173px; height: 22px; margin-right: 2.500px; padding-left: 6px; display: grid; grid-template-columns: 24px 1fr; align-items: center; border: 1px solid #8e8c89; border-radius: 3px; background: linear-gradient(#fff, #f0efee 50%, #e2e1df); }
.task.on { background: linear-gradient(#c0bebb, #cfcdca); }
.task b { font-weight: normal; letter-spacing: .05px; }
.pager { display: grid; grid-template-columns: repeat(4, 1fr); gap: 1px; width: 109px; height: 22px; padding: 1px; background: #edeceb; border: 1px solid #999; border-radius: 2px; }
.pager i { background: #a8a5a2; display: grid; place-items: center; }
.pager .cur { background: #c9dbf5; }
```
